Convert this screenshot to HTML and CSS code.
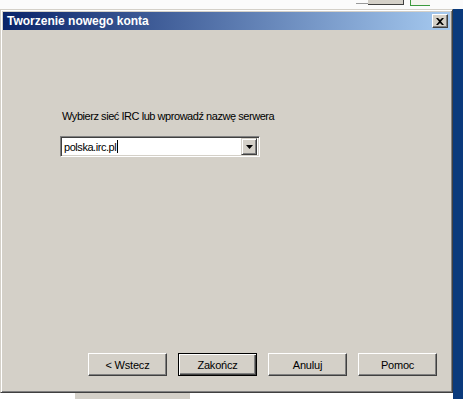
FILE: index.html
```html
<!DOCTYPE html>
<html lang="pl">

<head>
  <meta charset="UTF-8">
  <title>Tworzenie nowego konta</title>
  <link rel="stylesheet" href="styles.css">
</head>

<body>
  <div class="desktop">
    <div class="top-strip">
      <span class="bg-tool"></span>
      <span class="bg-button"></span>
      <span class="bg-green"></span>
    </div>

    <div class="window">
      <div class="titlebar">
        <span class="title">Tworzenie nowego konta</span>
        <span class="close-btn">
          <svg width="8" height="7" viewBox="0 0 8 7">
            <path d="M0 0h2l2 2 2-2h2L5 3.5 8 7H6L4 5 2 7H0l3-3.5z" fill="#000" />
          </svg>
        </span>
      </div>

      <div class="content">
        <div class="field">
          <p class="prompt">Wybierz sieć IRC lub wprowadź nazwę serwera</p>
          <div class="combo">
            <span class="combo-text">polska.irc.pl<span class="caret"></span></span>
            <span class="combo-arrow">
              <svg width="7" height="4" viewBox="0 0 7 4">
                <path d="M0 0h7L3.5 4z" fill="#000" />
              </svg>
            </span>
          </div>
        </div>

        <div class="buttons">
          <button type="button" class="btn">&lt; Wstecz</button>
          <button type="button" class="btn default">Zakończ</button>
          <button type="button" class="btn">Anuluj</button>
          <button type="button" class="btn">Pomoc</button>
        </div>
      </div>
    </div>

    <div class="blue-side"></div>

    <div class="bottom-strip">
      <span class="bg-grey-piece"></span>
    </div>
  </div>
</body>

</html>
```

FILE: styles.css
```css
* {
  box-sizing: border-box;
  font-family: Tahoma, 'Liberation Sans', sans-serif;
}

body {
  margin: 0;
  background: #fff;
}

.desktop {
  display: grid;
  grid-template-columns: 453px 10px;
  grid-template-rows: 9px 384px 6px;
  width: 463px;
  height: 399px;
  overflow: hidden;
}

/* bits of the windows behind the dialog */
.top-strip {
  grid-column: 1 / 3;
  display: flex;
  align-items: flex-start;
  background: #fbfbfb;
  padding-left: 356px;
}

.bg-tool {
  width: 12px;
  height: 4px;
  border-bottom: 1px solid #9a9a9a;
}

.bg-button {
  width: 36px;
  height: 5px;
  background: #d4d0c8;
  border-right: 1px solid #404040;
  border-bottom: 1px solid #404040;
}

.bg-green {
  width: 20px;
  height: 6px;
  margin-left: 6px;
  border-left: 1px solid #3c9a3c;
  border-bottom: 1px solid #3c9a3c;
  background: #f4f4ee;
}

.blue-side {
  grid-column: 2;
  grid-row: 2 / 4;
  background: #0a3a7c;
}

.bottom-strip {
  display: flex;
  padding-left: 75px;
  background: #fff;
}

.bg-grey-piece {
  width: 115px;
  background: #d4d0c8;
}

/* dialog */
.window {
  display: flex;
  flex-direction: column;
  background: #d4d0c8;
  border: 1px solid;
  border-color: #d4d0c8 #404040 #404040 #d4d0c8;
  box-shadow: inset 1px 1px #fff, inset -1px -1px #808080;
  padding: 2px;
}

.titlebar {
  display: flex;
  align-items: center;
  justify-content: space-between;
  height: 18px;
  padding: 0 2px 0 4px;
  background: linear-gradient(90deg, #0a246a 0%, #a6caf0 100%);
}

.title {
  color: #fff;
  font-size: 12px;
  font-weight: bold;
}

.close-btn {
  display: flex;
  align-items: center;
  justify-content: center;
  width: 16px;
  height: 14px;
  background: #d4d0c8;
  border: 1px solid;
  border-color: #fff #404040 #404040 #fff;
  box-shadow: inset -1px -1px #808080;
}

.content {
  flex: 1;
  display: flex;
  flex-direction: column;
  padding: 80px 12px 14px 57px;
}

.prompt {
  margin: 0 0 13px 2px;
  font-size: 11px;
  line-height: 13px;
  letter-spacing: -0.45px;
  color: #000;
}

.combo {
  display: flex;
  align-items: center;
  justify-content: space-between;
  width: 200px;
  height: 21px;
  background: #fff;
  border: 1px solid;
  border-color: #808080 #fff #fff #808080;
  box-shadow: inset 1px 1px #404040, inset -1px -1px #d4d0c8;
  padding: 2px;
}

.combo-text {
  display: flex;
  align-items: center;
  padding-left: 1px;
  font-size: 11px;
  letter-spacing: -0.45px;
  color: #000;
}

.caret {
  width: 1px;
  height: 13px;
  margin-left: 1px;
  background: #000;
}

.combo-arrow {
  display: flex;
  align-items: center;
  justify-content: center;
  width: 16px;
  height: 17px;
  background: #d4d0c8;
  border: 1px solid;
  border-color: #d4d0c8 #404040 #404040 #d4d0c8;
  box-shadow: inset 1px 1px #fff, inset -1px -1px #808080;
}

.buttons {
  display: flex;
  gap: 11px;
  margin-top: auto;
  padding-left: 28px;
}

.btn {
  width: 79px;
  height: 23px;
  padding: 0;
  font-size: 11px;
  letter-spacing: -0.2px;
  color: #000;
  background: #d4d0c8;
  border: 1px solid;
  border-color: #fff #404040 #404040 #fff;
  box-shadow: inset -1px -1px #808080;
}

.btn.default {
  border: 1px solid #000;
  box-shadow: inset 1px 1px #fff, inset -1px -1px #404040, inset -2px -2px #808080;
}
```
